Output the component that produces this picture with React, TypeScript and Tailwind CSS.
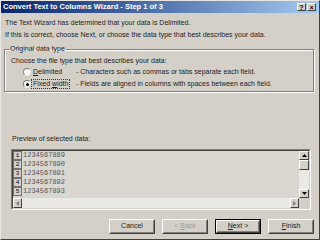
const rows = ['1234567889', '1234567890', '1234567891', '1234567892', '1234567893'];

function Radio({ checked }: { checked?: boolean }) {
  return (
    <span className="w-[8px] h-[8px] rounded-full bg-white border border-t-[#808080] border-l-[#808080] border-r-[#e8e6e2] border-b-[#e8e6e2] flex items-center justify-center shrink-0">
      {checked && <span className="w-[3px] h-[3px] rounded-full bg-black" />}
    </span>
  );
}

function Button({
  children,
  isDefault,
  disabled,
}: {
  children: React.ReactNode;
  isDefault?: boolean;
  disabled?: boolean;
}) {
  return (
    <div
      className={
        isDefault
          ? 'w-[46px] h-[15px] border border-black'
          : 'w-[46px] h-[15px]'
      }
    >
      <div className="w-full h-full border border-t-white border-l-white border-r-[#404040] border-b-[#404040]">
        <div
          className={
            disabled
              ? 'w-full h-full border border-t-[#d4d0c8] border-l-[#d4d0c8] border-r-[#808080] border-b-[#808080] flex items-center justify-center text-[#a09c96]'
              : 'w-full h-full border border-t-[#d4d0c8] border-l-[#d4d0c8] border-r-[#808080] border-b-[#808080] flex items-center justify-center text-[#222]'
          }
        >
          {children}
        </div>
      </div>
    </div>
  );
}

function TitleButton({ children }: { children: React.ReactNode }) {
  return (
    <div className="w-[9px] h-[8px] bg-[#d4d0c8] border border-t-white border-l-white border-r-[#404040] border-b-[#404040] flex items-center justify-center text-[7px] font-bold leading-none text-black">
      {children}
    </div>
  );
}

export default function App() {
  return (
    <div className="w-[320px] h-[240px] bg-[#d4d0c8] border border-t-[#e8e6e2] border-l-[#e8e6e2] border-r-[#404040] border-b-[#404040] flex flex-col font-['Liberation_Sans',Arial,sans-serif] text-[7px] text-[#1c1c1c] overflow-hidden">
      {/* Title bar */}
      <div className="h-[12px] bg-linear-to-r from-[#0a246a] to-[#a6caf0] flex items-center pl-[2px] pr-[3px] shrink-0">
        <span className="text-white font-bold text-[7.5px] leading-none">
          Convert Text to Columns Wizard - Step 1 of 3
        </span>
        <div className="ml-auto flex gap-[1px]">
          <TitleButton>?</TitleButton>
          <TitleButton>×</TitleButton>
        </div>
      </div>

      {/* Body */}
      <div className="flex flex-col pl-[4px] pr-[5px] mt-[4px]">
        <div className="h-[12px] leading-[12px]">
          The Text Wizard has determined that your data is Delimited.
        </div>
        <div className="h-[12px] leading-[12px]">
          If this is correct, choose Next, or choose the data type that best describes your data.
        </div>

        <fieldset className="mt-[2px] -ml-[1px] border border-[#808080] shadow-[inset_1px_1px_0_#fff,1px_1px_0_#fff] pl-[6px] pb-[1px]">
          <legend className="-ml-[2px] px-[1px] leading-[12px] h-[12px]">Original data type</legend>
          <div className="h-[11px] leading-[11px]">Choose the file type that best describes your data:</div>
          <div className="h-[12px] flex items-center">
            <div className="ml-[12px]">
              <Radio />
            </div>
            <div className="w-[45px] pl-[2px] leading-[12px]">
              <span className="underline">D</span>elimited
            </div>
            <div>- Characters such as commas or tabs separate each field.</div>
          </div>
          <div className="h-[12px] flex items-center">
            <div className="ml-[12px]">
              <Radio checked />
            </div>
            <div className="w-[45px]">
              <span className="inline-block border border-dotted border-[#333] px-[1px] leading-[8px]">
                Fixed <span className="underline">w</span>idth
              </span>
            </div>
            <div>- Fields are aligned in columns with spaces between each field.</div>
          </div>
        </fieldset>

        <div className="mt-[41px] ml-[7px] h-[12px] leading-[12px]">Preview of selected data:</div>

        {/* Preview box */}
        <div className="mt-[4px] ml-[6px] w-[300px] h-[61px] border border-t-[#808080] border-l-[#808080] border-r-white border-b-white">
          <div className="w-full h-full border border-t-[#404040] border-l-[#404040] border-r-[#d4d0c8] border-b-[#d4d0c8] grid grid-cols-[1fr_10px] grid-rows-[47px_10px] bg-[#dad7d1]">
            <div className="flex flex-col">
              {rows.map((r, i) => (
                <div key={r} className="h-[9px] flex items-center">
                  <div className="w-[9px] h-[9px] border border-[#707070] bg-[#d4d0c8] flex items-center justify-center text-[6px] leading-none font-['Liberation_Mono',monospace] text-black">
                    {i + 1}
                  </div>
                  <span className="pl-[1px] font-['Liberation_Mono',monospace] text-[7px] leading-none text-[#555]">
                    {r}
                  </span>
                </div>
              ))}
            </div>

            {/* vertical scrollbar */}
            <div className="flex flex-col bg-[#ebe9e5]">
              <div className="h-[9px] bg-[#d4d0c8] border border-t-white border-l-white border-r-[#404040] border-b-[#404040] flex items-center justify-center">
                <svg width="5" height="3" viewBox="0 0 5 3">
                  <path d="M2.5 0L5 3H0z" fill="#000" />
                </svg>
              </div>
              <div className="h-[10px] bg-[#d4d0c8] border border-t-white border-l-white border-r-[#404040] border-b-[#404040]" />
              <div className="mt-auto h-[9px] bg-[#d4d0c8] border border-t-white border-l-white border-r-[#404040] border-b-[#404040] flex items-center justify-center">
                <svg width="5" height="3" viewBox="0 0 5 3">
                  <path d="M0 0H5L2.5 3z" fill="#000" />
                </svg>
              </div>
            </div>

            {/* horizontal scrollbar */}
            <div className="flex bg-[#ebe9e5]">
              <div className="w-[9px] h-[10px] bg-[#d4d0c8] border border-t-white border-l-white border-r-[#404040] border-b-[#404040] flex items-center justify-center">
                <svg width="3" height="5" viewBox="0 0 3 5">
                  <path d="M0 2.5L3 0V5z" fill="#808080" />
                </svg>
              </div>
              <div className="ml-auto w-[9px] h-[10px] bg-[#d4d0c8] border border-t-white border-l-white border-r-[#404040] border-b-[#404040] flex items-center justify-center">
                <svg width="3" height="5" viewBox="0 0 3 5">
                  <path d="M3 2.5L0 0V5z" fill="#808080" />
                </svg>
              </div>
            </div>
            <div className="bg-[#d4d0c8]" />
          </div>
        </div>

        {/* Buttons */}
        <div className="mt-[9px] flex justify-end gap-[7px]">
          <Button>Cancel</Button>
          <Button disabled>
            &lt; <span className="underline ml-[2px]">B</span>ack
          </Button>
          <Button isDefault>
            <span className="underline">N</span>ext &gt;
          </Button>
          <Button>
            <span className="underline">F</span>inish
          </Button>
        </div>
      </div>
    </div>
  );
}
